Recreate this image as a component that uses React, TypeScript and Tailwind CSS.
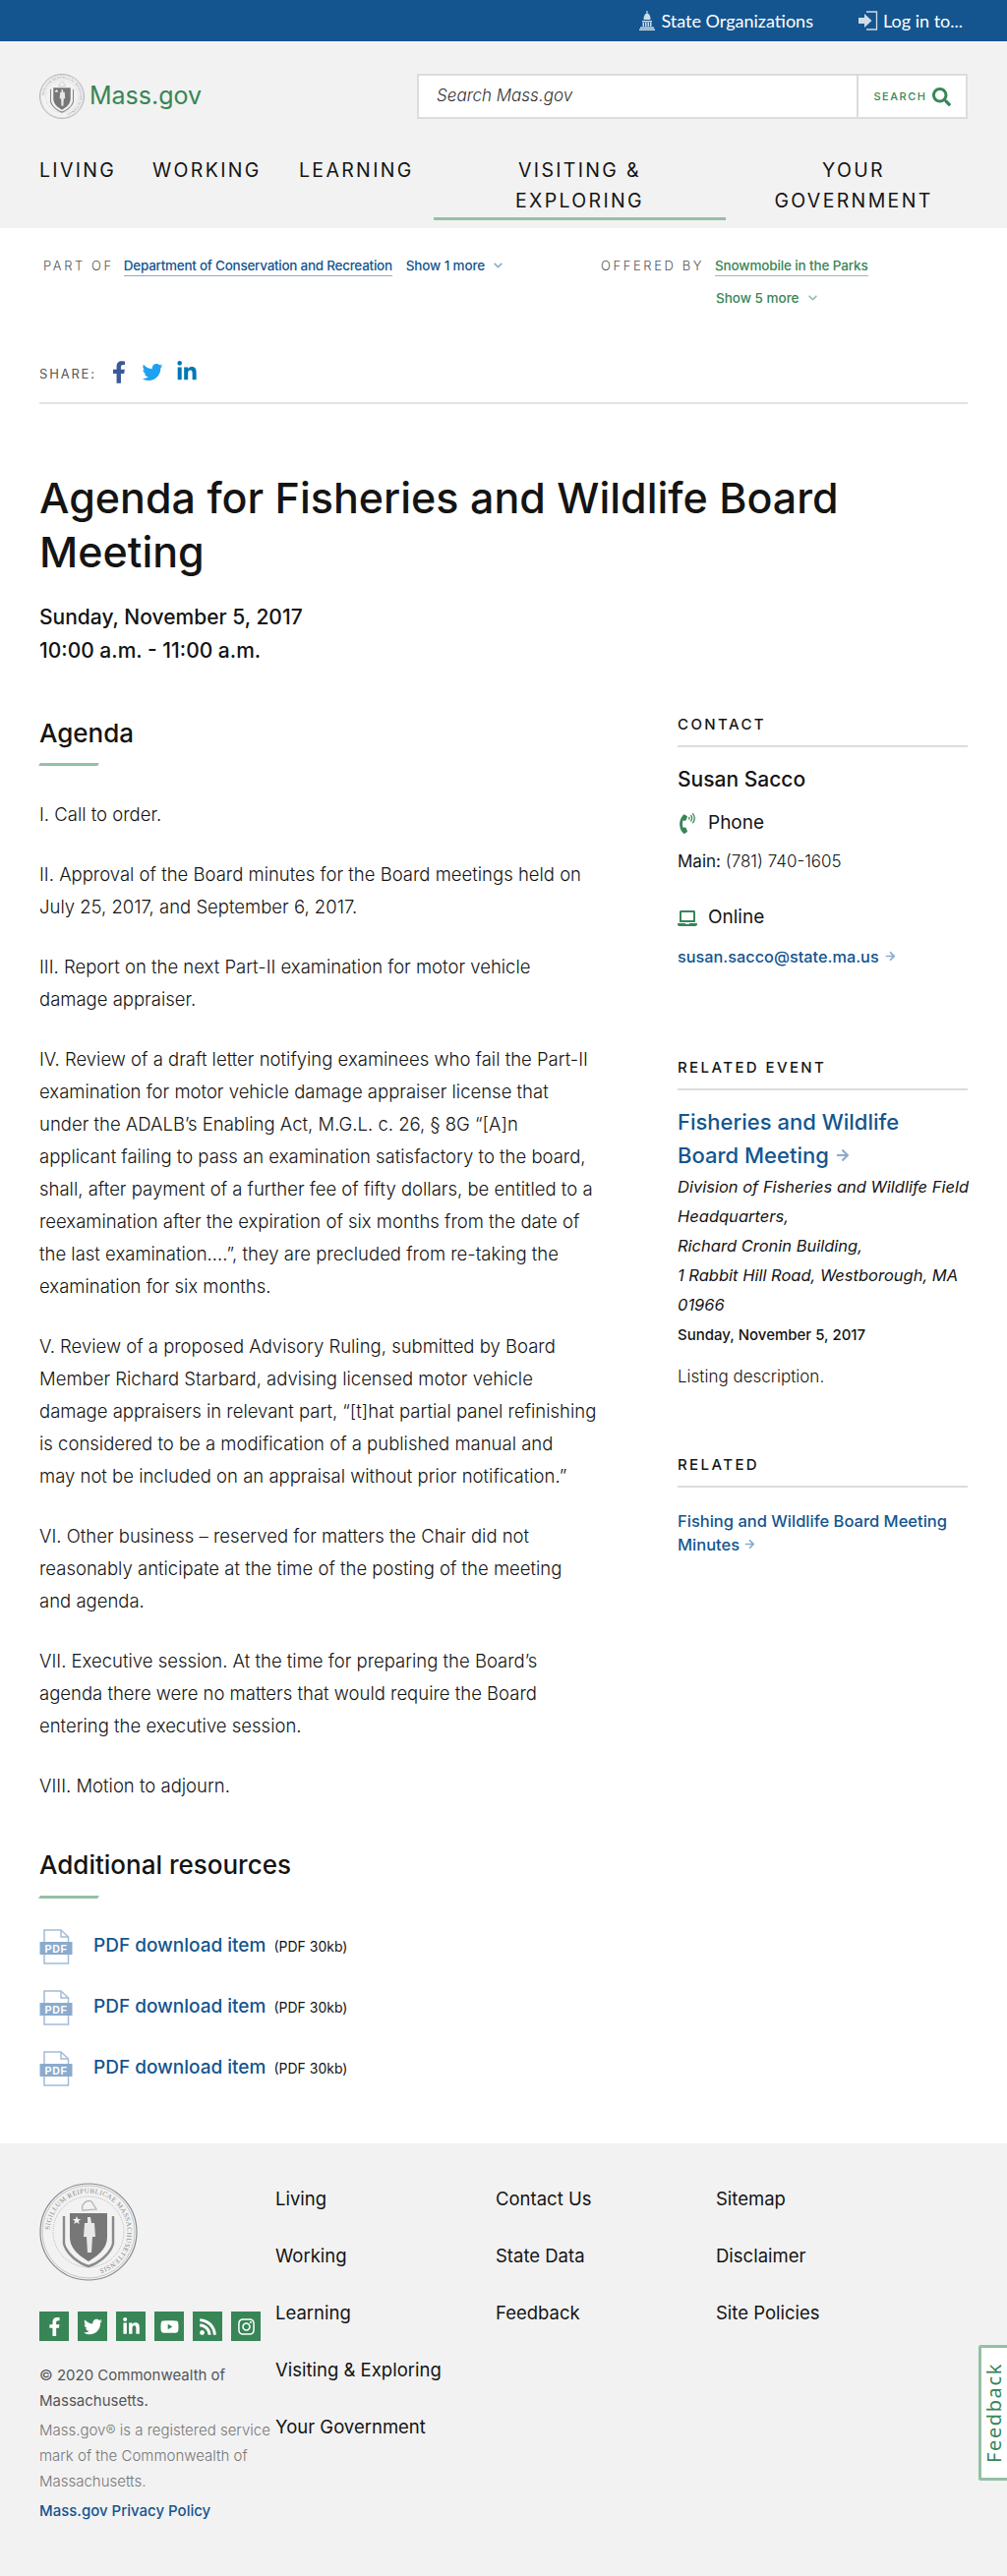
import { FaFacebookF, FaTwitter, FaLinkedinIn, FaYoutube, FaRss, FaInstagram, FaSearch, FaLaptop, FaArrowRight, FaChevronDown, FaPhoneVolume } from "react-icons/fa";

const paragraphs = [
    ["I. Call to order."],
    ["II. Approval of the Board minutes for the Board meetings held on", "July 25, 2017, and September 6, 2017."],
    ["III. Report on the next Part-II examination for motor vehicle", "damage appraiser."],
    [
        "IV. Review of a draft letter notifying examinees who fail the Part-II",
        "examination for motor vehicle damage appraiser license that",
        "under the ADALB’s Enabling Act, M.G.L. c. 26, § 8G “[A]n",
        "applicant failing to pass an examination satisfactory to the board,",
        "shall, after payment of a further fee of fifty dollars, be entitled to a",
        "reexamination after the expiration of six months from the date of",
        "the last examination….”, they are precluded from re-taking the",
        "examination for six months.",
    ],
    [
        "V. Review of a proposed Advisory Ruling, submitted by Board",
        "Member Richard Starbard, advising licensed motor vehicle",
        "damage appraisers in relevant part, “[t]hat partial panel refinishing",
        "is considered to be a modification of a published manual and",
        "may not be included on an appraisal without prior notification.”",
    ],
    [
        "VI. Other business – reserved for matters the Chair did not",
        "reasonably anticipate at the time of the posting of the meeting",
        "and agenda.",
    ],
    [
        "VII. Executive session. At the time for preparing the Board’s",
        "agenda there were no matters that would require the Board",
        "entering the executive session.",
    ],
    ["VIII. Motion to adjourn."],
];

const footerCols = [
    ["Living", "Working", "Learning", "Visiting & Exploring", "Your Government"],
    ["Contact Us", "State Data", "Feedback"],
    ["Sitemap", "Disclaimer", "Site Policies"],
];

function Seal({ size }: { size: number }) {
    return (
        <svg width={size} height={size} viewBox="0 0 100 100" className="shrink-0">
            <defs>
                <path id="sealRing" d="M50 50 m-39.500 0 a39.500 39.500 0 1 1 79 0 a39.500 39.500 0 1 1 -79 0" />
            </defs>
            <circle cx="50" cy="50" r="49" fill="none" stroke="#8a8a8a" strokeWidth="1.200" />
            <circle cx="50" cy="50" r="47" fill="none" stroke="#a8a8a8" strokeWidth="0.600" />
            <circle cx="50" cy="50" r="36" fill="none" stroke="#a8a8a8" strokeWidth="0.800" strokeDasharray="1 1" />
            <text fontSize="7" fill="#8a8a8a" fontFamily="'Liberation Serif', serif" letterSpacing="0.400">
                <textPath href="#sealRing" startOffset="2">SIGILLUM REIPUBLICAE MASSACHUSETTENSIS</textPath>
            </text>
            <path d="M31 31 H69 V55 C69 68 58 75 50 80 C42 75 31 68 31 55 Z" fill="#777777" />
            <path d="M25 34 V62 C28 73 40 82 50 85 C60 82 72 73 75 62 V34" fill="none" stroke="#8a8a8a" strokeWidth="2.400" />
            <path d="M49 35 h3 l1 6 h3 l1 14 h-3 l-1 16 h-4 l-1 -16 h-3 l1 -14 h3 Z" fill="#e8e8e8" />
            <path d="M38 34 l1.200 3 3 0 -2.400 2 1 3 -2.800 -1.800 -2.800 1.800 1 -3 -2.400 -2 3 0 Z" fill="#f2f2f2" />
            <path d="M44 28 C42 22 48 17 53 19 L58 27 Z" fill="none" stroke="#b0b0b0" strokeWidth="1.200" />
        </svg>
    );
}

function CapitolIcon() {
    return (
        <svg width="16" height="20" viewBox="0 0 16 20" fill="#cfdce9" className="shrink-0">
            <path d="M7.400 0 h1.200 v2.500 h-1.200 Z" />
            <path d="M4.500 9 C4.500 5 6 2.500 8 2.500 C10 2.500 11.500 5 11.500 9 Z" />
            <path d="M3 10 h10 v1.500 H3 Z" />
            <path d="M3.500 12 h1.500 v4 H3.500 Z M6 12 h1.500 v4 H6 Z M8.500 12 h1.500 v4 H8.500 Z M11 12 h1.500 v4 H11 Z" />
            <path d="M1 16.500 h14 V18 H1 Z M0 18.500 h16 V20 H0 Z" />
        </svg>
    );
}

function LoginIcon() {
    return (
        <svg width="20" height="20" viewBox="0 0 20 20" className="shrink-0">
            <path d="M8 1 H18.500 V19 H8" fill="none" stroke="#cfdce9" strokeWidth="1.300" />
            <path d="M0 7 H6 V3 L13.500 10 L6 17 V13 H0 Z" fill="#cfdce9" />
        </svg>
    );
}

function PdfIcon() {
    return (
        <svg width="34" height="36" viewBox="0 0 34 36" className="shrink-0">
            <path d="M5 1 H22 L29.500 8 V35 H5 Z" fill="#ffffff" stroke="#a3bcd6" strokeWidth="1.500" />
            <path d="M22 1 V8 H29.500" fill="none" stroke="#a3bcd6" strokeWidth="1.500" />
            <rect x="0.500" y="13" width="33" height="13" fill="#8aabcd" />
            <text x="17" y="23.500" textAnchor="middle" fontSize="10.500" fontWeight="700" fill="#ffffff" fontFamily="'Liberation Sans', sans-serif" letterSpacing="0.600">PDF</text>
        </svg>
    );
}

function SectionRule() {
    return <div className="h-[3px] w-[60px] -skew-x-[30deg] bg-[#94c0a5]" />;
}

function SideHeading({ children }: { children: React.ReactNode }) {
    return (
        <h2 className="border-b-2 border-[#dcdcdc] pb-[11px] text-[15px] font-medium leading-[20px] tracking-[0.16em] text-[#141414]">
            {children}
        </h2>
    );
}

export default function App() {
    return (
        <div className="relative h-[2620px] w-[1024px] overflow-hidden bg-white font-['Inter','Noto_Sans',sans-serif] text-[#141414]">
            {/* Utility bar */}
            <div className="flex h-[42px] items-center justify-end bg-[#14558f] pr-[45px] font-['Lato',sans-serif] text-[18px] text-white">
                <div className="flex items-center gap-[6px]">
                    <CapitolIcon />
                    State Organizations
                </div>
                <div className="ml-[46px] flex items-center gap-[5px]">
                    <LoginIcon />
                    Log in to...
                </div>
            </div>

            {/* Header */}
            <header className="h-[190px] bg-[#f2f2f2] px-[40px]">
                <div className="flex items-center justify-between pt-[33px]">
                    <div className="flex items-center gap-[5px]">
                        <Seal size={46} />
                        <span className="text-[25px] font-normal text-[#388557]">Mass.gov</span>
                    </div>
                    <div className="flex h-[46px] w-[560px] border-2 border-[#dcdcdc] bg-white">
                        <div className="flex flex-1 items-center pl-[18px] text-[17px] font-light italic text-[#333333]">Search Mass.gov</div>
                        <div className="flex w-[111px] items-center justify-center gap-[5px] border-l-2 border-[#dcdcdc] text-[#388557]">
                            <span className="text-[11px] font-medium tracking-[0.14em]">SEARCH</span>
                            <FaSearch className="h-[19px] w-[19px]" />
                        </div>
                    </div>
                </div>
                <nav className="mt-[37px] flex text-[19.500px] font-normal leading-[31px] tracking-[0.12em] text-[#141414]">
                    <span className="w-[115px] shrink-0">LIVING</span>
                    <span className="w-[149px] shrink-0">WORKING</span>
                    <span className="w-[137px] shrink-0">LEARNING</span>
                    <div className="relative h-[65px] w-[297px] shrink-0 text-center">
                        VISITING &amp;<br />EXPLORING
                        <div className="absolute bottom-[-1px] left-0 h-[3px] w-full bg-[#94c0a5]" />
                    </div>
                    <span className="w-[260px] shrink-0 text-center">YOUR<br />GOVERNMENT</span>
                </nav>
            </header>

            {/* Part of / Offered by */}
            <div className="flex px-[44px] pt-[28px] text-[13.500px]">
                <div className="flex w-[567px] items-baseline">
                    <span className="mr-[10px] text-[13px] font-light tracking-[0.2em] text-[#555555]">PART OF</span>
                    <span className="border-b border-[#8aabcd] font-medium tracking-[-0.02em] text-[#14558f]">Department of Conservation and Recreation</span>
                    <span className="ml-[14px] font-medium tracking-[-0.01em] text-[#14558f]">Show 1 more</span>
                    <FaChevronDown className="ml-[8px] h-[10px] w-[11px] text-[#8aabcd]" />
                </div>
                <div>
                    <div className="flex items-baseline">
                        <span className="mr-[11px] text-[13px] font-light tracking-[0.2em] text-[#555555]">OFFERED BY</span>
                        <span className="border-b border-[#94c0a5] font-medium tracking-[-0.01em] text-[#388557]">Snowmobile in the Parks</span>
                    </div>
                    <div className="ml-[117px] mt-[12px] flex items-center font-medium text-[#388557]">
                        Show 5 more
                        <FaChevronDown className="ml-[8px] h-[10px] w-[11px] text-[#94c0a5]" />
                    </div>
                </div>
            </div>

            {/* Share */}
            <div className="mx-[40px] mt-[50px] flex h-[47px] items-start border-b-2 border-[#e2e2e2]">
                <span className="mt-[7px] text-[13px] font-normal tracking-[0.14em] text-[#555555]">SHARE:</span>
                <FaFacebookF className="ml-[16px] mt-[3px] h-[23px] w-[14px] text-[#3b5998]" />
                <FaTwitter className="ml-[16px] mt-[4px] h-[21px] w-[22px] text-[#1da1f2]" />
                <FaLinkedinIn className="ml-[13px] mt-[3px] h-[22px] w-[22px] text-[#0077b5]" />
            </div>

            {/* Title */}
            <div className="px-[40px] pt-[68px]">
                <h1 className="w-[880px] text-[43px] font-medium leading-[55px] text-[#141414]">Agenda for Fisheries and Wildlife Board Meeting</h1>
                <div className="mt-[22px] text-[21px] font-medium leading-[34px]">
                    Sunday, November 5, 2017<br />10:00 a.m. - 11:00 a.m.
                </div>
            </div>

            {/* Main columns */}
            <div className="flex px-[40px] pt-[47px]">
                <main className="w-[560px]">
                    <h2 className="text-[26px] font-medium leading-[40px]">Agenda</h2>
                    <div className="mt-[10px]"><SectionRule /></div>
                    <div className="mt-[33px] flex flex-col gap-[28px] whitespace-nowrap text-[18.500px] font-light leading-[33px]">
                        {paragraphs.map((lines) => (
                            <p key={lines[0]}>
                                {lines.map((line) => (
                                    <span key={line} className="block">{line}</span>
                                ))}
                            </p>
                        ))}
                    </div>
                    <h2 className="mt-[44px] text-[26px] font-medium leading-[40px]">Additional resources</h2>
                    <div className="mt-[11px]"><SectionRule /></div>
                    <div className="mt-[31px] flex flex-col gap-[26px]">
                        {[0, 1, 2].map((i) => (
                            <div key={i} className="flex h-[36px] items-center">
                                <PdfIcon />
                                <span className="ml-[21px] text-[19px] font-medium text-[#14558f]">PDF download item</span>
                                <span className="ml-[8px] text-[14px] font-normal">(PDF 30kb)</span>
                            </div>
                        ))}
                    </div>
                </main>

                <aside className="ml-[89px] w-[295px] pt-[1px]">
                    <SideHeading>CONTACT</SideHeading>
                    <div className="mt-[18px] text-[21px] font-medium leading-[30px]">Susan Sacco</div>
                    <div className="mt-[16px] flex h-[28px] items-center gap-[11px] text-[19px] font-normal">
                        <FaPhoneVolume className="h-[21px] w-[20px] text-[#388557]" />
                        Phone
                    </div>
                    <div className="mt-[10px] text-[17px] font-light leading-[28px]">
                        <span className="font-normal">Main:</span> (781) 740-1605
                    </div>
                    <div className="mt-[30px] flex h-[28px] items-center gap-[11px] text-[19px] font-normal">
                        <FaLaptop className="h-[20px] w-[20px] text-[#388557]" />
                        Online
                    </div>
                    <div className="mt-[11px] flex items-center gap-[6px] whitespace-nowrap text-[16.300px] font-medium leading-[28px] text-[#14558f]">
                        susan.sacco@state.ma.us
                        <FaArrowRight className="h-[11px] w-[11px] text-[#8aabcd]" />
                    </div>

                    <div className="mt-[89px]"><SideHeading>RELATED EVENT</SideHeading></div>
                    <div className="mt-[15px] text-[22px] font-medium leading-[34px] text-[#14558f]">
                        Fisheries and Wildlife<br />
                        <span className="inline-flex items-center gap-[7px]">Board Meeting <FaArrowRight className="h-[14px] w-[14px] text-[#8aabcd]" /></span>
                    </div>
                    <div className="whitespace-nowrap text-[16.500px] font-normal italic leading-[30px]">
                        Division of Fisheries and Wildlife Field<br />
                        Headquarters,<br />
                        Richard Cronin Building,<br />
                        1 Rabbit Hill Road, Westborough, MA<br />
                        01966
                    </div>
                    <div className="mt-[2px] text-[15px] font-medium leading-[28px]">Sunday, November 5, 2017</div>
                    <div className="mt-[14px] text-[17px] font-light leading-[28px]">Listing description.</div>

                    <div className="mt-[66px]"><SideHeading>RELATED</SideHeading></div>
                    <div className="mt-[22px] whitespace-nowrap text-[16.500px] font-medium leading-[24px] text-[#14558f]">
                        Fishing and Wildlife Board Meeting<br />
                        <span className="inline-flex items-center gap-[5px]">Minutes <FaArrowRight className="h-[11px] w-[11px] text-[#8aabcd]" /></span>
                    </div>
                </aside>
            </div>

            {/* Footer */}
            <footer className="absolute bottom-0 left-0 flex h-[440px] w-full bg-[#f2f2f2] px-[40px] pt-[40px]">
                <div className="w-[240px]">
                    <Seal size={100} />
                    <div className="mt-[31px] flex gap-[9px]">
                        {[FaFacebookF, FaTwitter, FaLinkedinIn, FaYoutube, FaRss, FaInstagram].map((Icon, i) => (
                            <div key={i} className="flex h-[30px] w-[30px] items-center justify-center bg-[#388557] text-[#ffffff]">
                                <Icon className="h-[19px] w-[19px]" />
                            </div>
                        ))}
                    </div>
                    <div className="mt-[22px] text-[15px] font-normal leading-[26px] text-[#555555]">© 2020 Commonwealth of Massachusetts.</div>
                    <div className="mt-[4px] text-[15px] font-light leading-[26px] text-[#777777]">Mass.gov® is a registered service mark of the Commonwealth of Massachusetts.</div>
                    <div className="mt-[4px] text-[15px] font-medium leading-[26px] text-[#14558f]">Mass.gov Privacy Policy</div>
                </div>
                <div className="flex pt-[2px]">
                    {footerCols.map((col, i) => (
                        <div key={i} className="flex w-[224px] flex-col gap-[29px] text-[18.500px] leading-[29px] text-[#141414]">
                            {col.map((item) => (
                                <span key={item}>{item}</span>
                            ))}
                        </div>
                    ))}
                </div>
            </footer>

            {/* Feedback tab */}
            <div className="absolute right-0 top-[2385px] flex h-[138px] w-[29px] items-center justify-center rounded-l-[3px] border-[3px] border-r-0 border-[#94c0a5] bg-white">
                <span className="-rotate-90 whitespace-nowrap font-['Noto_Sans',sans-serif] text-[20px] tracking-[0.08em] text-[#388557]">Feedback</span>
            </div>
        </div>
    );
}
